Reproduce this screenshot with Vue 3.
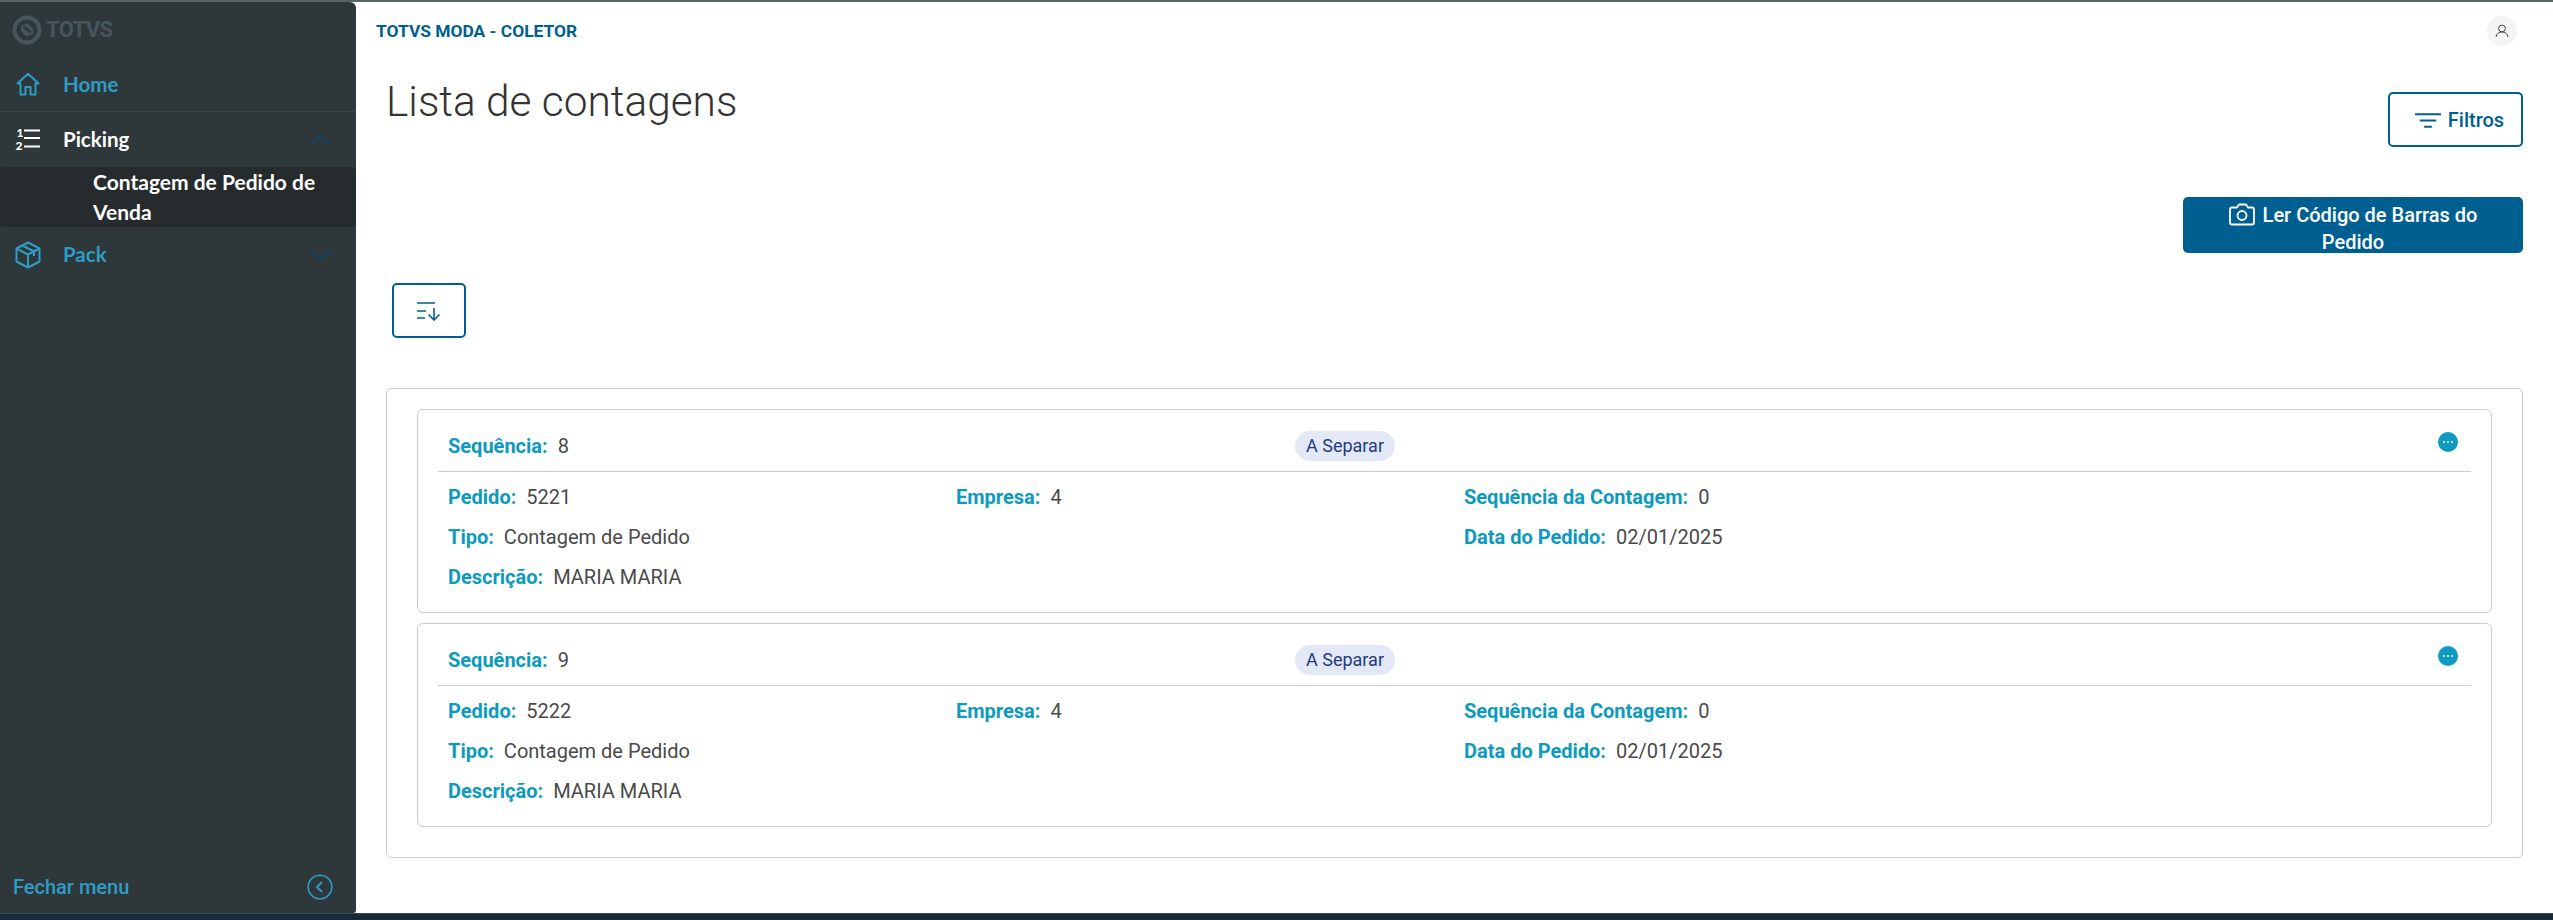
<script setup>
const cards = [
  { seq: 8, pedido: 5221 },
  { seq: 9, pedido: 5222 }
]
</script>

<template>
  <div class="screen">
    <div class="top-strip"></div>
    <div class="shell">
      <aside class="sidebar">
        <div class="logo">
          <svg class="logo-mark" width="30" height="30" viewBox="0 0 30 30" fill="none">
            <circle cx="15" cy="15" r="12.500" stroke="#46565c" stroke-width="4" />
            <path d="M9 10.500 L15.500 8.500 L21 13.500 V19.500 L14.500 21.500 L9 16.500 Z" fill="#46565c" />
            <path d="M11.500 11.500 L19 17.500" stroke="#2e383b" stroke-width="2.500" />
          </svg>
          <span class="logo-text">TOTVS</span>
        </div>
        <div class="nav-item home">
          <svg class="nav-icon" width="26" height="24" viewBox="0 0 26 24" fill="none" stroke="#2e9cc4" stroke-width="2">
            <path d="M2.500 11.500 L13 1.800 L23.500 11.500 H20.500 V22.500 H15.500 V15 H10.500 V22.500 H5.500 V11.500 Z" stroke-linejoin="round" />
          </svg>
          <span>Home</span>
        </div>
        <div class="nav-item picking">
          <svg class="nav-icon numbered" width="26" height="24" viewBox="0 0 26 24" fill="none">
            <path d="M9 2.500 H25 M9 10 H25 M9 18.500 H25" stroke="#fff" stroke-width="2" />
            <text x="1.500" y="9" class="num">1</text>
            <text x="0.500" y="21.500" class="num">2</text>
          </svg>
          <span>Picking</span>
          <svg class="chev" width="22" height="12" viewBox="0 0 22 12" fill="none" stroke="#0b4a6e" stroke-width="1.6">
            <path d="M1 11 L11 2 L21 11" />
          </svg>
        </div>
        <div class="sub-item">Contagem de Pedido de Venda</div>
        <div class="nav-item pack">
          <svg class="nav-icon" width="26" height="28" viewBox="0 0 26 28" fill="none" stroke="#2e9cc4" stroke-width="2" stroke-linejoin="round">
            <path d="M13 1.500 L24.500 7.500 V20.500 L13 26.500 L1.500 20.500 V7.500 Z M1.500 7.500 L13 13.500 L24.500 7.500 M13 13.500 V26.500 M7.500 4.500 L19 10.500 V15" />
          </svg>
          <span>Pack</span>
          <svg class="chev" width="22" height="12" viewBox="0 0 22 12" fill="none" stroke="#0b4a6e" stroke-width="1.6">
            <path d="M1 1 L11 10 L21 1" />
          </svg>
        </div>
        <div class="side-foot">
          <span>Fechar menu</span>
          <svg width="26" height="26" viewBox="0 0 26 26" fill="none" stroke="#2e9cc4" stroke-width="1.6">
            <circle cx="13" cy="13" r="11.800" />
            <path d="M15 8 L10 13 L15 18" stroke-width="2" />
          </svg>
        </div>
      </aside>

      <main class="main">
        <header class="topbar">
          <span class="app-name">TOTVS MODA - COLETOR</span>
          <span class="avatar">
            <svg width="14" height="14" viewBox="0 0 14 14" fill="none" stroke="#444" stroke-width="1">
              <circle cx="7" cy="4.500" r="3.400" />
              <path d="M1 13 C1.500 9.500 4 8 7 8 C10 8 12.500 9.500 13 13" />
            </svg>
          </span>
        </header>

        <div class="title-row">
          <h1>Lista de contagens</h1>
          <button class="btn outline filter">
            <svg width="26" height="16" viewBox="0 0 27 16" fill="none" stroke="#005f91" stroke-width="2">
              <path d="M0 2 H27 M5 8.500 H22 M9.500 15 H17.500" />
            </svg>
            Filtros
          </button>
        </div>

        <div class="action-row">
          <button class="btn solid">
            <svg class="cam" width="26" height="23" viewBox="0 0 26 23" fill="none" stroke="#fff" stroke-width="1.8" stroke-linejoin="round">
              <path d="M3 4.500 H8 L10 1.500 H17 L19 4.500 H23 Q25 4.500 25 6.500 V19.500 Q25 21.500 23 21.500 H3 Q1 21.500 1 19.500 V6.500 Q1 4.500 3 4.500 Z" />
              <circle cx="13" cy="12.500" r="4.500" />
            </svg>
            Ler Código de Barras do Pedido
          </button>
        </div>

        <button class="btn outline sort">
          <svg width="24" height="20" viewBox="0 0 24 20" fill="none" stroke="#005f91" stroke-width="1.600">
            <path d="M0 2 H18 M0 10 H9 M0 17 H8 M17 7 V19 M11.500 13.500 L17 19 L22.500 13.500" />
          </svg>
        </button>

        <section class="panel">
          <article v-for="c in cards" :key="c.seq" class="card">
            <div class="card-head">
              <div class="col"><b>Sequência:</b><span>{{ c.seq }}</span></div>
              <div class="badge">A Separar</div>
              <span class="more"><i></i><i></i><i></i></span>
            </div>
            <div class="card-body">
              <div class="col"><b>Pedido:</b><span>{{ c.pedido }}</span></div>
              <div class="col"><b>Empresa:</b><span>4</span></div>
              <div class="col"><b>Sequência da Contagem:</b><span>0</span></div>
              <div class="col"><b>Tipo:</b><span>Contagem de Pedido</span></div>
              <div class="col"></div>
              <div class="col"><b>Data do Pedido:</b><span>02/01/2025</span></div>
              <div class="col"><b>Descrição:</b><span>MARIA MARIA</span></div>
            </div>
          </article>
        </section>
      </main>
    </div>
    <div class="bottom-strip"></div>
  </div>
</template>

<style>
html, body { margin: 0; padding: 0; background: #fff; }
</style>

<style scoped>
.screen {
  width: 2553px;
  height: 920px;
  display: flex;
  flex-direction: column;
  overflow: hidden;
  background: #2e383b;
  font-family: Roboto, "Liberation Sans", sans-serif;
}
.top-strip { height: 2px; background: #5a6466; flex: none; }
.bottom-strip { height: 7px; background: #1b2a3a; border-top: 1px solid #3a4a55; box-sizing: border-box; flex: none; }
.shell { flex: 1; display: flex; min-height: 0; background: #fff; }

.sidebar {
  width: 356px;
  flex: none;
  background: #2e383b;
  border-top-right-radius: 6px;
  border-bottom-right-radius: 3px;
  display: flex;
  flex-direction: column;
  font-family: Lato, "Open Sans", sans-serif;
  font-weight: 700;
  font-size: 20.500px;
  color: #2e9cc4;
}
.logo { height: 55px; flex: none; display: flex; align-items: center; gap: 4px; padding: 0 0 0 12px; box-sizing: border-box; }
.logo-text { font-family: Roboto, sans-serif; font-size: 22px; font-weight: 700; color: #46565c; letter-spacing: -0.6px; }
.nav-item { display: flex; align-items: center; height: 55px; padding: 0 24px 0 15px; box-sizing: border-box; flex: none; }
.nav-item > span { margin-left: 22px; flex: 1; }
.picking > span, .pack > span { padding-bottom: 2px; }
.nav-icon { flex: none; }
.numbered { overflow: visible; }
.home { border-bottom: 1px solid #3a4649; }
.picking { color: #fff; }
.num { font: 900 12px Lato, sans-serif; fill: #fff; }
.chev { flex: none; }
.sub-item {
  height: 60px;
  flex: none;
  box-sizing: border-box;
  padding: 0 12px 0 93px;
  background: #262c2e;
  border-radius: 4px;
  color: #fff;
  line-height: 30px;
  font-size: 21px;
}
.side-foot {
  margin-top: auto;
  height: 52px;
  flex: none;
  padding: 0 23px 0 13px;
  display: flex;
  align-items: center;
  justify-content: space-between;
  font-family: Roboto, sans-serif;
  font-weight: 500;
  font-size: 20px;
  box-sizing: border-box;
}

.main { flex: 1; min-width: 0; background: #fff; display: flex; flex-direction: column; padding: 0 30px; }
.topbar { height: 58px; flex: none; display: flex; align-items: center; justify-content: space-between; margin-left: -10px; }
.app-name { color: #005f91; font-weight: 700; font-size: 17.400px; }
.avatar {
  width: 30px; height: 30px; border-radius: 50%; background: #f4f4f4;
  display: flex; align-items: center; justify-content: center;
  margin-right: 6px;
}
.title-row { display: flex; justify-content: space-between; height: 105px; flex: none; }
h1 { margin: 17px 0 0; font-size: 42.400px; line-height: 50px; font-weight: 300; color: #333; }
.btn {
  font-family: Roboto, sans-serif;
  box-sizing: border-box;
  border-radius: 5px;
  cursor: pointer;
  font-weight: 500;
  font-size: 20px;
}
.outline { background: #fff; border: 2px solid #005f91; color: #005f91; display: flex; align-items: center; justify-content: center; }
.filter { width: 135px; height: 55px; gap: 7px; margin-top: 32px; padding-left: 8px; padding-right: 0; }
.action-row { display: flex; justify-content: flex-end; height: 56px; flex: none; margin-top: 32px; }
.solid {
  width: 340px; height: 56px; background: #005f91; color: #fff; border: none;
  line-height: 27px; padding: 5px 30px 0; text-align: center;
}
.cam { vertical-align: -4px; margin-right: 3px; }
.sort { width: 74px; height: 55px; margin: 30px 0 0 6px; flex: none; }
.panel {
  margin-top: 50px;
  border: 1px solid #ccc;
  border-radius: 5px;
  padding: 20px 30px 29px;
  display: flex;
  flex-direction: column;
  gap: 10px;
  height: 470px;
  box-sizing: border-box;
}
.card { border: 1px solid #ccc; border-radius: 6px; padding: 0 20px; height: 204px; box-sizing: border-box; flex: none; }
.card-head {
  height: 62px; box-sizing: border-box; border-bottom: 1px solid #ccc;
  display: flex; align-items: center; padding: 10px 10px 0; position: relative;
}
.card-head .col { width: 847px; flex: none; }
.badge {
  background: #e3e8f7; color: #1f3a80; border-radius: 15px; height: 30px; line-height: 30px;
  padding: 0 11px; font-size: 18px;
}
.more {
  position: absolute; right: 13px; top: 22px;
  width: 20px; height: 20px; border-radius: 50%; background: #0c9abe;
  display: flex; align-items: center; justify-content: center; gap: 2px;
}
.more i { width: 2px; height: 2px; background: #fff; border-radius: 50%; }
.card-body {
  display: grid;
  grid-template-columns: 508px 508px 1fr;
  padding: 5px 10px 0;
  grid-auto-rows: 40px;
}
.col { font-size: 20px; display: flex; align-items: center; gap: 10px; color: #4a4a4a; }
.col b { color: #0c9abe; font-weight: 700; }
</style>
